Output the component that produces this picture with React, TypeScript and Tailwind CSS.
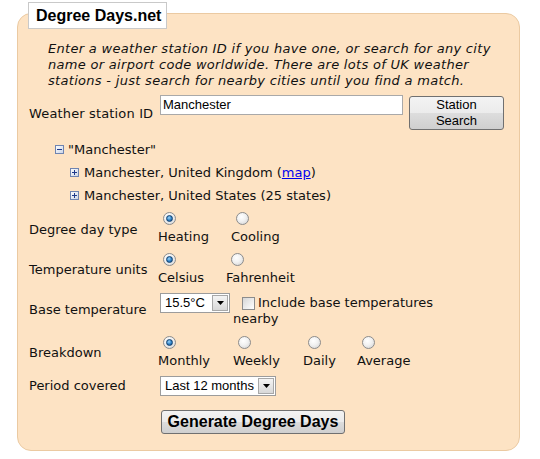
import React from "react";

const verdana = "font-['DejaVu_Sans',Verdana,sans-serif]";
const arial = "font-['Liberation_Sans',Arial,sans-serif]";

function Radio({ checked }: { checked?: boolean }) {
  return (
    <span className="flex w-[13px] h-[13px] items-center justify-center rounded-full border border-[#8c8c8c] bg-[radial-gradient(circle_at_40%_35%,#ffffff_0%,#f1f1f1_45%,#cfcfcf_100%)]">
      {checked && (
        <span className="block w-[7px] h-[7px] rounded-full border border-[#12406e] bg-[radial-gradient(circle_at_40%_35%,#9fd6fb_0%,#2c7fc4_55%,#124b85_100%)]" />
      )}
    </span>
  );
}

function Option({ label, checked, w }: { label: string; checked?: boolean; w: string }) {
  return (
    <div className={`flex flex-col items-start ${w}`}>
      <span className="ml-[5px]">
        <Radio checked={checked} />
      </span>
      <span className="mt-[4px] leading-[16px] whitespace-nowrap">{label}</span>
    </div>
  );
}

function TreeIcon({ plus }: { plus?: boolean }) {
  return (
    <svg width="9" height="9" viewBox="0 0 9 9" className="shrink-0">
      <defs>
        <linearGradient id={plus ? "gp" : "gm"} x1="0" y1="0" x2="1" y2="1">
          <stop offset="0" stopColor="#ffffff" />
          <stop offset="1" stopColor="#c9d3e6" />
        </linearGradient>
      </defs>
      <rect x="0.5" y="0.5" width="8" height="8" fill={`url(#${plus ? "gp" : "gm"})`} stroke="#6f84b0" />
      <rect x="2" y="4" width="5" height="1" fill="#1f3a8a" />
      {plus && <rect x="4" y="2" width="1" height="5" fill="#1f3a8a" />}
    </svg>
  );
}

function Select({ value, w }: { value: string; w: string }) {
  return (
    <div className={`flex h-[20px] ${w} items-stretch border border-[#9c9c9c] bg-white ${arial} text-[13px] text-black`}>
      <span className="flex-1 pl-[4px] leading-[18px] whitespace-nowrap">{value}</span>
      <span className="m-[1px] flex w-[16px] items-center justify-center border border-[#a8a8a8] bg-[linear-gradient(#f4f4f4,#d8d8d8)]">
        <svg width="7" height="4" viewBox="0 0 7 4">
          <path d="M0 0h7L3.5 4z" fill="#000" />
        </svg>
      </span>
    </div>
  );
}

function Row({ label, children, labelClass = "" }: { label: string; children: React.ReactNode; labelClass?: string }) {
  return (
    <div className="flex items-start">
      <div className={`w-[129px] shrink-0 self-center leading-[16px] ${labelClass}`}>{label}</div>
      <div className="flex items-start">{children}</div>
    </div>
  );
}

export default function App() {
  return (
    <div className={`w-[540px] h-[459px] bg-white pt-[2px] pl-[17px] ${verdana} text-[13px] text-[#111]`}>
      <div className={`relative z-10 ml-[11px] flex h-[27px] w-fit items-center border border-[#c9c9c9] bg-white pl-[7px] pr-[5px] ${arial} text-[16px] font-bold text-black`}>
        Degree Days.net
      </div>
      <div className="-mt-[16px] w-[503px] rounded-[14px] border border-[#ebcaa2] bg-[#fde3c4] pt-[27px] pb-[16px] pl-[11px]">
        <p className="ml-[19px] italic leading-[16px] tracking-[0.3px] whitespace-nowrap">
          Enter a weather station ID if you have one, or search for any city
          <br />
          name or airport code worldwide. There are lots of UK weather
          <br />
          stations - just search for nearby cities until you find a match.
        </p>

        <div className="mt-[6px] flex items-start">
          <div className="w-[129px] shrink-0 self-center pt-[3px] leading-[16px] tracking-[0.15px]">Weather station ID</div>
          <div className={`ml-[2px] h-[20px] w-[243px] border border-[#a9a9a9] bg-white pl-[2px] ${arial} text-[13px] leading-[18px] text-black`}>
            Manchester
          </div>
          <button
            className={`ml-[6px] mt-[1px] flex h-[34px] w-[95px] flex-col items-center justify-center rounded-[3px] border border-[#707070] bg-[linear-gradient(#f3f3f3_0%,#ebebeb_50%,#dddddd_50%,#cfcfcf_100%)] ${arial} text-[13px] leading-[16px] text-black`}
          >
            <span>Station</span>
            <span>Search</span>
          </button>
        </div>

        <div className="mt-[8px]">
          <div className="flex h-[23px] items-center pl-[26px]">
            <TreeIcon />
            <span className="ml-[4px]">"Manchester"</span>
          </div>
          <div className="flex h-[23px] items-center pl-[41px]">
            <TreeIcon plus />
            <span className="ml-[5px]">
              Manchester, United Kingdom (<span className="text-[#0000ee] underline">map</span>)
            </span>
          </div>
          <div className="flex h-[23px] items-center pl-[41px]">
            <TreeIcon plus />
            <span className="ml-[5px]">Manchester, United States (25 states)</span>
          </div>
        </div>

        <div className="mt-[5px]">
          <Row label="Degree day type" labelClass="pt-[3px]">
            <Option label="Heating" checked w="w-[73px]" />
            <Option label="Cooling" w="w-[70px]" />
          </Row>
        </div>

        <div className="mt-[8px]">
          <Row label="Temperature units" labelClass="pt-[1px]">
            <Option label="Celsius" checked w="w-[68px]" />
            <Option label="Fahrenheit" w="w-[90px]" />
          </Row>
        </div>

        <div className="mt-[7px]">
          <Row label="Base temperature">
            <div className="ml-[2px]">
              <Select value="15.5°C" w="w-[70px]" />
            </div>
            <div className="ml-[3px] pt-[2px] leading-[16px]">
              <div className="flex items-center whitespace-nowrap">
                <span className="ml-[9px] mr-[3px] block h-[13px] w-[13px] border border-[#8c8c8c] bg-[linear-gradient(135deg,#d6d6d6,#ffffff)]" />
                Include base temperatures
              </div>
              <div>nearby</div>
            </div>
          </Row>
        </div>

        <div className="mt-[9px]">
          <Row label="Breakdown">
            <Option label="Monthly" checked w="w-[75px]" />
            <Option label="Weekly" w="w-[70px]" />
            <Option label="Daily" w="w-[54px]" />
            <Option label="Average" w="w-[70px]" />
          </Row>
        </div>

        <div className="mt-[7px]">
          <Row label="Period covered">
            <div className="ml-[2px]">
              <Select value="Last 12 months" w="w-[116px]" />
            </div>
          </Row>
        </div>

        <button
          className={`ml-[132px] mt-[14px] flex h-[24px] w-[184px] items-center justify-center rounded-[3px] border border-[#707070] bg-[linear-gradient(#f3f3f3_0%,#ebebeb_50%,#dddddd_50%,#cfcfcf_100%)] ${arial} text-[16px] font-bold text-black`}
        >
          Generate Degree Days
        </button>
      </div>
    </div>
  );
}
